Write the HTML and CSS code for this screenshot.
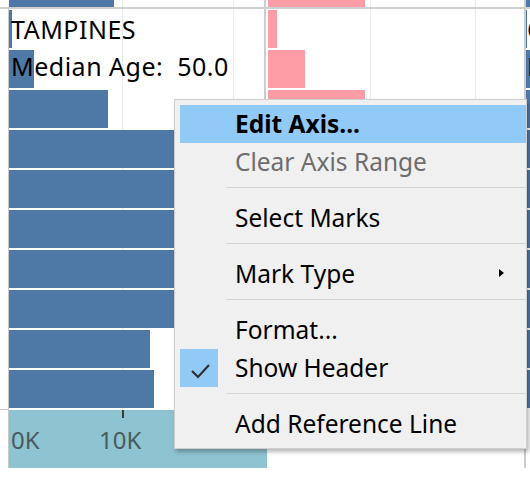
FILE: index.html
```html
<!DOCTYPE html>
<html>
<head>
<meta charset="utf-8">
<link rel="stylesheet" href="styles.css">
</head>
<body>
<div class="viz">
  <div class="row row-top">
    <div class="gutter"></div>
    <div class="pane pane-left pane-open">
      <div class="bar blue" style="width:105px"></div>
    </div>
    <div class="pane pane-right">
      <div class="bar pink" style="width:97px"></div>
    </div>
    <div class="pane pane-edge">
      <div class="bar blue" style="width:4px"></div>
    </div>
  </div>

  <div class="row row-main">
    <div class="gutter gutter-main"></div>
    <div class="pane pane-left">
      <div class="title">
        <div class="title-line">TAMPINES</div>
        <div class="title-line">Median Age:  50.0</div>
      </div>
      <div class="bars">
        <div class="bar blue" style="width:3px"></div>
        <div class="bar blue" style="width:25px"></div>
        <div class="bar blue" style="width:99px"></div>
        <div class="bar blue" style="width:210px"></div>
        <div class="bar blue" style="width:236px"></div>
        <div class="bar blue" style="width:224px"></div>
        <div class="bar blue" style="width:198px"></div>
        <div class="bar blue" style="width:187px"></div>
        <div class="bar blue" style="width:141px"></div>
        <div class="bar blue" style="width:145px"></div>
      </div>
    </div>
    <div class="pane pane-right">
      <div class="bars">
        <div class="bar pink" style="width:9px"></div>
        <div class="bar pink" style="width:37px"></div>
        <div class="bar pink" style="width:97px"></div>
        <div class="bar pink" style="width:120px"></div>
        <div class="bar pink" style="width:140px"></div>
        <div class="bar pink" style="width:128px"></div>
        <div class="bar pink" style="width:110px"></div>
        <div class="bar pink" style="width:96px"></div>
        <div class="bar pink" style="width:70px"></div>
        <div class="bar pink" style="width:66px"></div>
      </div>
    </div>
    <div class="pane pane-edge">
      <div class="title edge-title">
        <div class="title-line">C</div>
        <div class="title-line">M</div>
      </div>
      <div class="bars">
        <div class="bar blue" style="width:1px"></div>
        <div class="bar blue" style="width:4px"></div>
        <div class="bar blue" style="width:4px"></div>
        <div class="bar blue" style="width:4px"></div>
        <div class="bar blue" style="width:4px"></div>
        <div class="bar blue" style="width:4px"></div>
        <div class="bar blue" style="width:4px"></div>
        <div class="bar blue" style="width:4px"></div>
        <div class="bar blue" style="width:4px"></div>
        <div class="bar blue" style="width:4px"></div>
      </div>
    </div>
  </div>

  <div class="row row-axis">
    <div class="gutter"></div>
    <div class="axis">
      <span class="tick" style="left:113px"></span>
      <span class="axis-label" style="left:2px">0K</span>
      <span class="axis-label" style="left:90px">10K</span>
    </div>
    <div class="axis-empty"></div>
    <div class="pane-edge"></div>
  </div>
</div>

<div class="menu">
  <div class="item active bold"><span class="icon"></span><span class="text">Edit Axis...</span></div>
  <div class="item disabled"><span class="icon"></span><span class="text">Clear Axis Range</span></div>
  <div class="sep"></div>
  <div class="item"><span class="icon"></span><span class="text">Select Marks</span></div>
  <div class="sep"></div>
  <div class="item"><span class="icon"></span><span class="text">Mark Type</span><span class="arrow"></span></div>
  <div class="sep"></div>
  <div class="item"><span class="icon"></span><span class="text">Format...</span></div>
  <div class="item"><span class="icon checked"><svg width="38" height="38" viewBox="0 0 38 38"><path d="M12 22 L18 28 L29 16" fill="none" stroke="#2f2f2f" stroke-width="2.2"/></svg></span><span class="text">Show Header</span></div>
  <div class="sep"></div>
  <div class="item"><span class="icon"></span><span class="text">Add Reference Line</span></div>
</div>
</body>
</html>
```

FILE: styles.css
```css
* { box-sizing: border-box; }

html, body {
  margin: 0;
  padding: 0;
}

body {
  width: 530px;
  height: 484px;
  overflow: hidden;
  background: #ffffff;
  font-family: "Noto Sans", "DejaVu Sans", sans-serif;
  color: #000;
  position: relative;
}

.viz {
  display: flex;
  flex-direction: column;
  width: 530px;
}

.row {
  display: flex;
}

.row-top {
  height: 7px;
}

.row-main {
  height: 403px;
  border-top: 2px solid #d0d0d0;
}

.row-axis {
  height: 58px;
}

.gutter {
  width: 8px;
  flex: none;
}

.gutter-main {
  border-bottom: 1px solid #c6c6c6;
}

.pane {
  flex: none;
  position: relative;
}

.pane-left {
  width: 258px;
  border-left: 1px solid #c8c8c8;
  border-right: 2px solid #cdcdcd;
  background-image:
    linear-gradient(to right,
      transparent 113px, #ebebeb 113px, #ebebeb 114px, transparent 114px,
      transparent 224px, #ebebeb 224px, #ebebeb 225px, transparent 225px);
}

.pane-open {
  border-left-color: #ffffff;
}

.pane-right {
  width: 260px;
  padding-left: 2px;
  border-right: 2px solid #cdcdcd;
  background-image:
    linear-gradient(to right,
      transparent 104px, #ebebeb 104px, #ebebeb 105px, transparent 105px,
      transparent 209px, #ebebeb 209px, #ebebeb 210px, transparent 210px);
}

.pane-edge {
  width: 4px;
  flex: none;
  overflow: hidden;
  position: relative;
}

.row-main .pane {
  padding-top: 1px;
}

.bars {
  display: flex;
  flex-direction: column;
  gap: 2px;
}

.bar {
  height: 38px;
  flex: none;
}

.row-top .bar {
  height: 7px;
}

.blue { background: #4e79a7; }
.pink { background: #ff9da7; }

.title {
  position: absolute;
  left: 2px;
  top: 2px;
  font-size: 25px;
  line-height: 37px;
  letter-spacing: 0.5px;
  color: #000;
  z-index: 1;
}

.title-line {
  white-space: pre;
}

.edge-title {
  left: 1px;
}

.axis {
  width: 259px;
  flex: none;
  border-left: 1px solid #c8c8c8;
  background: #8ec3d1;
  position: relative;
}

.tick {
  position: absolute;
  top: 0;
  width: 2px;
  height: 8px;
  background: #3a3a3a;
}

.axis-label {
  position: absolute;
  top: 15px;
  font-size: 24px;
  line-height: 30px;
  color: #4a5b60;
}

.axis-empty {
  width: 259px;
  flex: none;
  border-right: 2px solid #cdcdcd;
}

/* context menu */
.menu {
  position: absolute;
  left: 174px;
  top: 99px;
  width: 353px;
  padding: 5px 0 5px 5px;
  background: #f0f0f0;
  border: 1px solid #cfcfcf;
  box-shadow: 2px 3px 4px rgba(0, 0, 0, 0.28);
  font-size: 24.5px;
  z-index: 5;
}

.item {
  display: flex;
  align-items: center;
  height: 38px;
  line-height: 38px;
  color: #000;
}

.item.active {
  background: #91c9f7;
}

.item.bold {
  font-weight: 700;
}

.item.disabled {
  color: #6d6d6d;
}

.icon {
  width: 38px;
  height: 38px;
  flex: none;
  margin-right: 17px;
}

.icon svg {
  display: block;
}

.icon.checked {
  background: #91c9f7;
}

.text {
  flex: 1;
  white-space: nowrap;
}

.arrow {
  width: 0;
  height: 0;
  border-left: 5px solid #000;
  border-top: 4.5px solid transparent;
  border-bottom: 4.5px solid transparent;
  margin-right: 22px;
  margin-top: -3px;
}

.sep {
  height: 1px;
  margin: 6px 0 11px 46px;
  background: #d6d6d6;
}
```
